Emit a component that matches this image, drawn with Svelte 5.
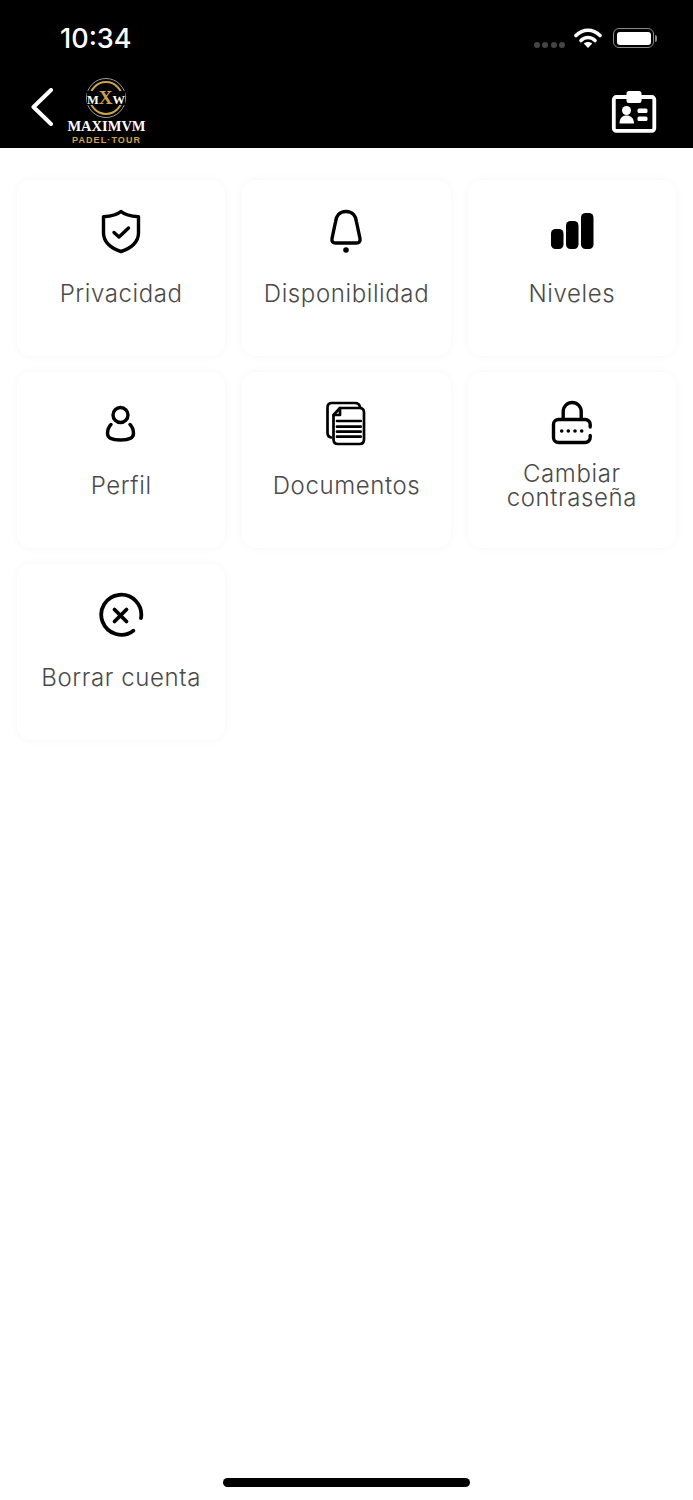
<script>
  const items = [
    { id: 'shield', label: 'Privacidad' },
    { id: 'bell', label: 'Disponibilidad' },
    { id: 'bars', label: 'Niveles' },
    { id: 'user', label: 'Perfil' },
    { id: 'docs', label: 'Documentos' },
    { id: 'lock', label: 'Cambiar contraseña' },
    { id: 'close', label: 'Borrar cuenta' }
  ];
</script>

<div class="page">
  <header class="header">
    <div class="status">
      <span class="time">10:34</span>
      <div class="status-icons">
        <div class="signal">
          {#each Array(4) as _}
            <span class="dot"></span>
          {/each}
        </div>
        <svg class="wifi" width="28" height="22" viewBox="0 0 28 22">
          <path d="M2 8.500C9 1.500 19 1.500 26 8.500" fill="none" stroke="#fff" stroke-width="3.600" stroke-linecap="round" />
          <path d="M7 13.500C11 9.500 17 9.500 21 13.500" fill="none" stroke="#fff" stroke-width="3.600" stroke-linecap="round" />
          <path d="M14 21l-4.200-4.600c2.400-2 6-2 8.400 0z" fill="#fff" />
        </svg>
        <div class="battery">
          <div class="battery-fill"></div>
        </div>
        <span class="battery-cap"></span>
      </div>
    </div>

    <nav class="nav">
      <svg class="back" width="22" height="38" viewBox="0 0 22 38">
        <path d="M20 2L2.500 19L20 36" fill="none" stroke="#fff" stroke-width="4" stroke-linecap="round" stroke-linejoin="round" />
      </svg>
      <svg class="logo" width="82" height="68" viewBox="0 0 82 68">
        <circle cx="39" cy="20" r="19.500" fill="#000" stroke="#9a9a9a" stroke-width="1" />
        <circle cx="39" cy="20" r="16" fill="none" stroke="#d0a343" stroke-width="2" />
        <rect x="20" y="13" width="38" height="14" fill="#000" />
        <text x="39" y="25.500" class="logo-mark" text-anchor="middle">M<tspan class="logo-x">X</tspan>W</text>
        <text x="39.500" y="52.500" class="logo-name" text-anchor="middle">MAXIMVM</text>
        <text x="39" y="65" class="logo-sub" text-anchor="middle" textLength="68">PADEL·TOUR</text>
      </svg>
      <svg class="card-icon" width="46" height="42" viewBox="0 0 46 42">
        <rect x="2.800" y="6" width="40.500" height="33.800" rx="2.500" fill="none" stroke="#fff" stroke-width="3.800" />
        <rect x="15.500" y="0" width="15" height="12" rx="2.500" fill="#fff" />
        <circle cx="15.500" cy="19.500" r="4.500" fill="#fff" />
        <path d="M8.500 32.500c0-5.500 3-8 7-8s7.500 2.500 7.500 8z" fill="#fff" />
        <rect x="26.500" y="17.500" width="10" height="4.400" rx="1.500" fill="#fff" />
        <rect x="26.500" y="25.500" width="10" height="4.400" rx="1.500" fill="#fff" />
      </svg>
    </nav>
  </header>

  <main class="grid">
    {#each items as item}
      <div class="tile">
        <svg class="icon" width="48" height="48" viewBox="0 0 48 48">
          {#if item.id === 'shield'}
            <path d="M24 3.500C20 7 13 8.300 6.500 8.700V25C6.500 34 14 40.500 24 43.500C34 40.500 41.500 34 41.500 25V8.700C35 8.300 28 7 24 3.500Z" class="line" />
            <path d="M17 24.500L22 29L31.500 20" class="line" />
          {:else if item.id === 'bell'}
            <path d="M24 3.500C17.500 3.500 14 8 13.500 14L10 30.500C9.500 33.500 11 35 13.500 35H34.500C37 35 38.500 33.500 38 30.500L34.500 14C34 8 30.500 3.500 24 3.500Z" class="line" />
            <circle cx="24" cy="42" r="2.800" class="solid" />
          {:else if item.id === 'bars'}
            <rect x="3" y="21" width="12.500" height="20" rx="4.500" class="solid" />
            <rect x="18" y="13" width="12.500" height="28" rx="4.500" class="solid" />
            <rect x="33" y="5" width="12.500" height="36" rx="4.500" class="solid" />
          {:else if item.id === 'user'}
            <circle cx="23.500" cy="15" r="7.500" class="line" />
            <path d="M14 24.500C11.500 27 10.500 30 10.500 33.500C10.500 37 13.500 40 23.500 40C33.500 40 36.500 37 36.500 33.500C36.500 30 35.500 27 33 24.500" class="line" />
          {:else if item.id === 'docs'}
            <path d="M9 37.500C6.500 37 5.500 35.500 5.500 33V7.500C5.500 4.500 7 3 10 3H33C36 3 37.500 4.500 38 7" class="line thin" />
            <path d="M18 8H37.500C40.500 8 42 9.500 42 12.500V39.500C42 42.500 40.500 44 37.500 44H16C13 44 11.500 42.500 11.500 39.500V15Z" class="line thin" />
            <path d="M18 8V15H11.500" class="line thin" />
            <path d="M15 21H38.700M15 26.700H38.700M15 31.700H38.700M15 36.700H38.700" class="line thin" />
          {:else if item.id === 'lock'}
            <path d="M15.200 19V11.500A9 9 0 0 1 33.200 11.500V19" class="line" />
            <path d="M42.200 27V24.500A5 5 0 0 0 37.200 19.500H10.500A5 5 0 0 0 5.500 24.500V37.500A5 5 0 0 0 10.500 42.500H37.200A5 5 0 0 0 42.200 37.500V35.500" class="line" />
            <circle cx="13.700" cy="31" r="1.800" class="solid" />
            <circle cx="20.300" cy="31" r="1.800" class="solid" />
            <circle cx="27" cy="31" r="1.800" class="solid" />
            <circle cx="33.700" cy="31" r="1.800" class="solid" />
          {:else}
            <path d="M36.300 38.700A20 20 0 1 1 44 26" class="line heavy" />
            <path d="M17.500 17.500L29.500 29.500M29.500 17.500L17.500 29.500" class="line heavy" />
          {/if}
        </svg>
        <div class="label">{item.label}</div>
      </div>
    {/each}
  </main>

  <div class="home-bar"></div>
</div>

<style>
  :global(body) {
    margin: 0;
    background: #fff;
  }

  .page {
    display: flex;
    flex-direction: column;
    width: 693px;
    height: 1500px;
    font-family: 'Inter', 'Lato', sans-serif;
  }

  .header {
    background: #000;
    height: 148px;
    flex-shrink: 0;
  }

  .status {
    display: flex;
    justify-content: space-between;
    align-items: center;
    height: 76px;
    padding: 0 36px 0 60px;
  }

  .time {
    color: #fff;
    font-size: 27px;
    font-weight: 500;
  }

  .status-icons {
    display: flex;
    align-items: center;
  }

  .signal {
    display: flex;
    gap: 2.400px;
    margin: 14px 9px 0 0;
  }

  .dot {
    width: 6px;
    height: 6px;
    border-radius: 50%;
    background: #444;
  }

  .wifi {
    margin-right: 11px;
  }

  .battery {
    box-sizing: border-box;
    width: 41px;
    height: 20px;
    padding: 2.500px;
    border: 1.500px solid #8a8a8a;
    border-radius: 6px;
  }

  .battery-fill {
    height: 100%;
    background: #fff;
    border-radius: 3px;
  }

  .battery-cap {
    width: 2px;
    height: 7px;
    margin-left: 1px;
    background: #8a8a8a;
    border-radius: 0 2px 2px 0;
  }

  .nav {
    display: flex;
    align-items: center;
    height: 72px;
    padding: 0 36px 0 31px;
  }

  .back {
    margin: -10px 14px 0 0;
  }

  .logo-mark {
    font: 700 12.500px 'Liberation Serif', serif;
    fill: #fff;
  }

  .logo-x {
    font-size: 19px;
    fill: #d0a343;
  }

  .logo-name {
    font: 700 14.500px 'Liberation Serif', serif;
    fill: #fff;
  }

  .logo-sub {
    font: 700 9px 'Liberation Sans', sans-serif;
    fill: #d0a343;
  }

  .card-icon {
    margin-left: auto;
  }

  .grid {
    display: grid;
    grid-template-columns: repeat(3, minmax(0, 1fr));
    grid-auto-rows: 176px;
    gap: 16px 17px;
    padding: 32px 17px 0;
  }

  .tile {
    display: flex;
    flex-direction: column;
    align-items: center;
    padding-top: 28px;
    background: #fff;
    border-radius: 14px;
    box-shadow: 0 0 10px rgba(0, 0, 0, 0.04);
  }

  .icon {
    display: block;
  }

  .line {
    fill: none;
    stroke: #000;
    stroke-width: 3.400;
    stroke-linecap: round;
    stroke-linejoin: round;
  }

  .thin {
    stroke-width: 2.700;
  }

  .heavy {
    stroke-width: 3.800;
  }

  .solid {
    fill: #000;
  }

  .label {
    display: flex;
    align-items: center;
    justify-content: center;
    height: 48px;
    margin-top: 14px;
    padding: 0 8px;
    color: #4a4a4a;
    font-size: 24px;
    font-weight: 300;
    line-height: 24px;
    letter-spacing: 0.6px;
    text-align: center;
  }

  .home-bar {
    width: 247px;
    height: 9px;
    margin: auto auto 13px;
    background: #000;
    border-radius: 5px;
  }
</style>
